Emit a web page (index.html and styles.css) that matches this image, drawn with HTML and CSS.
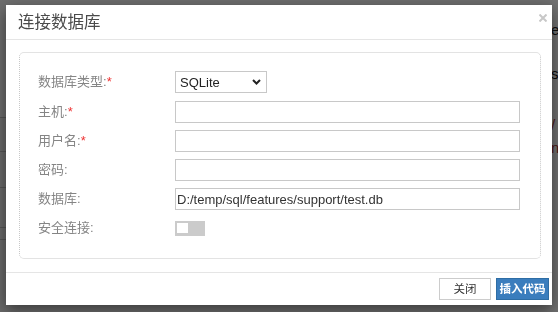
FILE: index.html
```html
<!DOCTYPE html>
<html lang="zh">
<head>
<meta charset="utf-8">
<title>连接数据库</title>
<link rel="stylesheet" href="styles.css">
</head>
<body>
<div class="page">
  <div class="page-side">
    <div class="side-row r1"></div>
    <div class="side-row r2"></div>
    <div class="side-row r3"></div>
    <div class="side-row r4"></div>
    <div class="side-row r5"></div>
  </div>
  <div class="page-main"></div>
  <div class="page-peek">
    <span class="pk p1">e</span>
    <span class="pk p2">s</span>
    <span class="pk p3">/</span>
    <span class="pk p4">n</span>
  </div>
</div>
<div class="backdrop">
  <div class="modal">
    <div class="modal-header">
      <h4 class="modal-title">连接数据库</h4>
      <button class="close" type="button" aria-label="关闭">
        <svg width="8" height="8" viewBox="0 0 8 8"><path d="M0.5 0.5 L7.5 7.5 M7.5 0.5 L0.5 7.5" stroke="#c8c8c8" stroke-width="2" fill="none"/></svg>
      </button>
    </div>
    <div class="modal-body">
      <div class="fieldset">
        <div class="row">
          <label class="lbl">数据库类型:<span class="req">*</span></label>
          <div class="select-wrap">
            <select class="sel"><option>SQLite</option></select>
            <svg class="chev" width="9" height="6" viewBox="0 0 9 6"><path d="M1 1 L4.5 4.5 L8 1" stroke="#222" stroke-width="2" fill="none"/></svg>
          </div>
        </div>
        <div class="row">
          <label class="lbl">主机:<span class="req">*</span></label>
          <input class="inp" type="text">
        </div>
        <div class="row">
          <label class="lbl">用户名:<span class="req">*</span></label>
          <input class="inp" type="text">
        </div>
        <div class="row">
          <label class="lbl">密码:</label>
          <input class="inp" type="password">
        </div>
        <div class="row">
          <label class="lbl">数据库:</label>
          <input class="inp" type="text" value="D:/temp/sql/features/support/test.db">
        </div>
        <div class="row">
          <label class="lbl">安全连接:</label>
          <span class="toggle"><span class="knob"></span></span>
        </div>
      </div>
    </div>
    <div class="modal-footer">
      <button class="btn btn-default" type="button">关闭</button>
      <button class="btn btn-primary" type="button">插入代码</button>
    </div>
  </div>
</div>
</body>
</html>
```
FILE: styles.css
```css
* { box-sizing: border-box; }
html, body { margin: 0; padding: 0; }
body {
  width: 558px;
  height: 312px;
  overflow: hidden;
  font-family: "Liberation Sans", "Noto Sans CJK SC", sans-serif;
  font-size: 13px;
  color: #333;
  background: #fff;
}
.page {
  display: flex;
  height: 312px;
  background: #f4f4f4;
}
.page-side {
  width: 20px;
  display: flex;
  flex-direction: column;
  background: #eaeaea;
}
.side-row { border-bottom: 1px solid #bdbdbd; }
.r1 { height: 118px; background: #f2f2f2; }
.r2 { height: 34px; }
.r3 { height: 36px; }
.r4 { height: 40px; }
.r5 { height: 12px; }
.page-main { flex: 1; }
.page-peek {
  width: 8px;
  display: flex;
  flex-direction: column;
  font-family: "Liberation Sans", sans-serif;
  font-size: 15px;
  line-height: 1;
  overflow: hidden;
  background: #fbfbfb;
}
.pk { display: block; padding-left: 1px; }
.p1 { margin-top: 22px; color: #222; }
.p2 { margin-top: 29px; color: #111; }
.p3 { margin-top: 36px; color: #a33; }
.p4 { margin-top: 8px; color: #a33; }
.backdrop {
  position: fixed;
  inset: 0;
  background: rgba(0, 0, 0, 0.55);
  padding: 5px 6px 0 6px;
}
.modal {
  width: 546px;
  height: 300px;
  background: #fff;
  box-shadow: 0 5px 15px rgba(0, 0, 0, 0.5);
  display: flex;
  flex-direction: column;
}
.modal-header {
  height: 35px;
  border-bottom: 1px solid #e5e5e5;
  display: flex;
  align-items: center;
  justify-content: space-between;
  padding: 0 5px 3px 12px;
}
.modal-title {
  margin: 0;
  font-size: 16.5px;
  font-weight: normal;
  color: #4a4a4a;
  letter-spacing: 0;
}
.close {
  border: 0;
  background: none;
  padding: 0;
  width: 8px;
  height: 8px;
  display: flex;
  margin-bottom: 6px;
}
.modal-body {
  padding: 12px 11px 13px 13px;
}
.fieldset {
  height: 207px;
  border: 1px dotted #c8c8c8;
  border-top: 1px solid #e3e3e3;
  border-bottom: 1px solid #e3e3e3;
  border-radius: 5px;
  padding: 18px 20px 0 18px;
  display: flex;
  flex-direction: column;
  gap: 7px;
}
.row {
  display: flex;
  align-items: center;
  height: 22px;
}
.row:first-child { margin-bottom: 1px; }
.lbl {
  width: 137px;
  flex: none;
  color: #858585;
  font-size: 13px;
  line-height: 22px;
}
.req { color: #e33; }
.select-wrap {
  position: relative;
  width: 92px;
  height: 22px;
}
.sel {
  appearance: none;
  -webkit-appearance: none;
  width: 92px;
  height: 22px;
  border: 1px solid #c8c8c8;
  border-radius: 0;
  background: #fff;
  font-family: "Liberation Sans", sans-serif;
  font-size: 13px;
  color: #222;
  padding: 0 0 0 4px;
  margin: 0;
}
.chev {
  position: absolute;
  right: 6px;
  top: 8px;
  pointer-events: none;
}
.inp {
  flex: 1;
  height: 22px;
  border: 1px solid #c8c8c8;
  border-radius: 0;
  padding: 0 0 0 1px;
  margin: 0;
  font-family: "Liberation Sans", sans-serif;
  font-size: 13px;
  color: #333;
  background: #fff;
}
.toggle {
  width: 30px;
  height: 15px;
  background: #cbcbcb;
  display: flex;
  align-items: center;
  padding-left: 2px;
}
.knob {
  width: 11px;
  height: 10px;
  background: #fff;
}
.modal-footer {
  flex: 1;
  border-top: 1px solid #e5e5e5;
  display: flex;
  justify-content: flex-end;
  align-items: flex-start;
  gap: 5px;
  padding: 5px 3px 0 0;
}
.btn {
  height: 22px;
  font-family: "Liberation Sans", "Noto Sans CJK SC", sans-serif;
  font-size: 11.5px;
  line-height: 20px;
  padding: 0;
  margin: 0;
  border-radius: 0;
  text-align: center;
}
.btn-default {
  width: 52px;
  background: #fff;
  border: 1px solid #ccc;
  color: #333;
}
.btn-primary {
  width: 53px;
  background: #3a7dbd;
  border: 1px solid #2e6da4;
  color: #fff;
  font-weight: bold;
}
```
